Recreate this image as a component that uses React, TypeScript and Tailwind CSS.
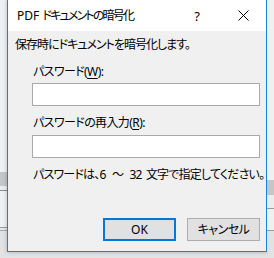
import * as React from 'react';

const font = "font-['Segoe_UI','Noto_Sans','Noto_Sans_CJK_JP',sans-serif] [font-feature-settings:'palt']";

function SideStrip({bands}: {bands: {h: string; c: string}[]}) {
  return (
    <div className="flex w-[7px] flex-col">
      {bands.map((b, i) => (
        <div key={i} className={`${b.h} ${b.c}`} />
      ))}
    </div>
  );
}

export default function App() {
  return (
    <div className={`flex h-[258px] w-[274px] flex-col overflow-hidden bg-[#e3e3e3] text-[12px] text-black ${font}`}>
      <div className="flex h-[252px]">
        <SideStrip
          bands={[
            {h: 'h-[172px]', c: 'bg-[#f0f0f0]'},
            {h: 'h-[14px]', c: 'bg-[#c6c6c6]'},
            {h: 'h-[4px]', c: 'bg-[#ececec]'},
            {h: 'h-px', c: 'bg-[#8a8a8a]'},
            {h: 'h-[36px]', c: 'bg-[#f0f0f0]'},
            {h: 'h-px', c: 'bg-[#9a9a9a]'},
            {h: 'h-[2px]', c: 'bg-[#e6e6e6]'},
            {h: 'h-px', c: 'bg-[#a8a8a8]'},
            {h: 'flex-1', c: 'bg-[#e2e2e2]'},
          ]}
        />

        <div className="flex w-[260px] flex-col border-x border-b border-[#1883d7] bg-[#f0f0f0] shadow-[0_0_4px_rgba(0,0,0,0.25)]">
          {/* title bar */}
          <div className="flex h-[31px] items-center bg-white pl-[9px]">
            <span className="flex-1 whitespace-nowrap leading-4">
              PDF <span className="tracking-[-1.8px]">ドキュメントの暗号化</span>
            </span>
            <span className="w-[46px] text-center text-[13px] leading-4">?</span>
            <span className="flex w-[46px] items-center justify-center">
              <svg width="11" height="11" viewBox="0 0 11 11">
                <path d="M0.5 0.5 L10.5 10.5 M10.5 0.5 L0.5 10.5" stroke="#000" strokeWidth="1" fill="none" />
              </svg>
            </span>
          </div>

          <div className="flex flex-1 flex-col pl-[7px] pr-[6px] pb-[10px] tracking-[-1px]">
            <p className="mt-[6px] h-4 whitespace-nowrap leading-4">保存時にドキュメントを暗号化します。</p>

            <div className="flex flex-col pl-[17px]">
              <label className="mt-[11px] h-4 pl-px leading-4 tracking-[-0.6px]">
                パスワード(<span className="underline underline-offset-2">W</span>):
              </label>
              <input
                type="password"
                className="mt-[3px] h-[23px] border border-[#a9a9a9] bg-white outline-none"
              />

              <label className="mt-[9px] h-4 pl-px leading-4 tracking-[-0.6px]">
                パスワードの再入力(<span className="underline underline-offset-2">R</span>):
              </label>
              <input
                type="password"
                className="mt-[4px] h-[23px] border border-[#a9a9a9] bg-white outline-none"
              />

              <p className="mt-[9px] h-4 whitespace-nowrap pl-px leading-4 tracking-[-0.8px]">
                パスワードは、6<span className="pl-[4px]"> </span>～<span className="pl-[4px]"> </span>32<span className="pl-[2px]"> </span>文字で指定してください。
              </p>
            </div>

            <div className="mt-auto flex justify-end gap-[11px] tracking-normal">
              <button className="h-[23px] w-[73px] border-2 border-[#0078d7] bg-[#e1e1e1] leading-4">OK</button>
              <button className="h-[23px] w-[73px] border border-[#adadad] bg-[#e1e1e1] leading-4 tracking-[-0.5px]">キャンセル</button>
            </div>
          </div>
        </div>

        <SideStrip
          bands={[
            {h: 'h-[180px]', c: 'bg-[#f0f0f0]'},
            {h: 'h-[15px]', c: 'bg-[#c6c6c6]'},
            {h: 'h-[13px]', c: 'bg-[#ececec]'},
            {h: 'h-px', c: 'bg-[#9a9a9a]'},
            {h: 'h-[21px]', c: 'bg-[#f0f0f0]'},
            {h: 'h-px', c: 'bg-[#9a9a9a]'},
            {h: 'flex-1', c: 'bg-[#e2e2e2]'},
          ]}
        />
      </div>
    </div>
  );
}
